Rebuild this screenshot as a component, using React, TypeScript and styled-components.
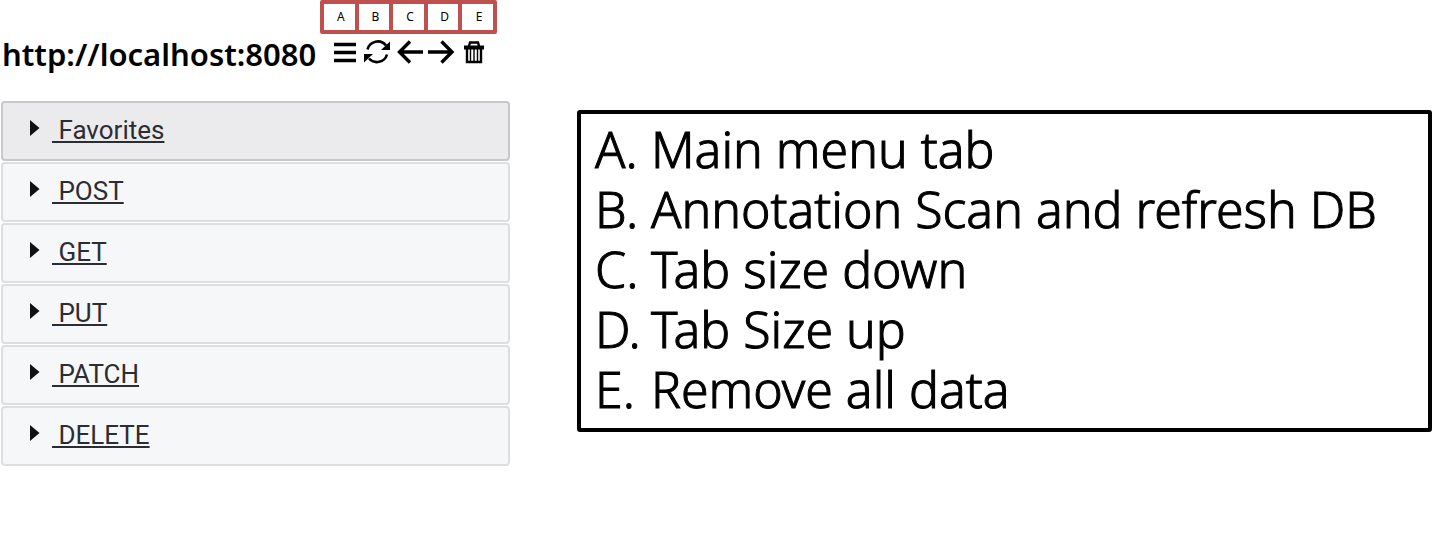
import React from "react";
import styled, { createGlobalStyle } from "styled-components";

const GlobalStyle = createGlobalStyle`
  *, *::before, *::after { box-sizing: border-box; }
  body {
    margin: 0;
    background: #fff;
    color: #000;
    font-family: "Noto Sans", "Open Sans", sans-serif;
  }
`;

const Page = styled.main`
  display: flex;
  align-items: flex-start;
`;

const Sidebar = styled.section`
  flex: 0 1 512px;
  padding-right: 2px;
`;

const Header = styled.header`
  display: grid;
  grid-template-columns: 320px max-content;
  grid-template-rows: 34px 40px;
  align-items: center;
  margin-bottom: 27px;
`;

const Title = styled.h1`
  grid-row: 2;
  margin: 0;
  padding-left: 2px;
  font-size: 31px;
  line-height: 40px;
  font-weight: 600;
  white-space: nowrap;
`;

const Tags = styled.ol`
  grid-column: 2;
  display: grid;
  grid-template-columns: repeat(5, 1fr);
  gap: 4px;
  width: 177px;
  height: 34px;
  margin: 0;
  padding: 4px;
  list-style: none;
  background: #c0504d;
  border-radius: 2px;
`;

const Tag = styled.li`
  display: flex;
  align-items: center;
  justify-content: center;
  padding-left: 3px;
  background: #fff;
  font-size: 12px;
  line-height: 16px;
`;

const Toolbar = styled.div`
  grid-row: 2;
  grid-column: 2;
  display: flex;
  gap: 5px;
  padding: 0 0 4px 10px;
`;

const ToolButton = styled.button`
  display: flex;
  padding: 0;
  border: 0;
  background: none;
  color: #000;
  cursor: pointer;
`;

const Groups = styled.nav`
  display: flex;
  flex-direction: column;
  gap: 1px;
  padding-left: 1px;
`;

const Group = styled.details<{ $active?: boolean }>`
  border: 2px solid ${(p) => (p.$active ? "#c8c8c8" : "#dedede")};
  border-radius: 4px;
  background: ${(p) => (p.$active ? "#ebebed" : "#f6f7f9")};
`;

const GroupHeading = styled.summary`
  display: flex;
  align-items: center;
  height: 56px;
  padding: 0 0 2px 27px;
  list-style: none;
  cursor: pointer;
  &::-webkit-details-marker { display: none; }
`;

const Marker = styled.svg`
  flex: none;
  margin: 0 12px 4px 0;
`;

const GroupLink = styled.a`
  color: #2b2d33;
  font-family: Roboto, sans-serif;
  font-size: 26px;
  line-height: 30px;
  white-space: pre;
  text-decoration: underline;
  text-decoration-thickness: 2px;
  text-underline-offset: 2px;
  text-decoration-skip-ink: none;
`;

const Legend = styled.ol`
  flex: 1 1 0;
  min-width: 0;
  margin: 110px 0 0 65px;
  padding: 5px 14px 9px;
  border: 4px solid #000;
  border-radius: 3px;
  list-style: none;
`;

const LegendRow = styled.li`
  display: grid;
  grid-template-columns: 56px 1fr;
  font-size: 50px;
  line-height: 60px;
  font-weight: 300;
  -webkit-text-stroke: 1px #000;
  white-space: nowrap;
`;

const tools = [
  {
    label: "Main menu tab",
    width: 28,
    icon: <path d="M4 5.5h22M4 13.500h22M4 21.500h22" stroke="currentColor" strokeWidth="3.400" />,
  },
  {
    label: "Annotation scan and refresh DB",
    width: 29,
    icon: (
      <>
        <path d="M4.500 10.500A10.500 10.500 0 0 1 23 6.500M24 15.500A10.500 10.500 0 0 1 6 19.500" fill="none" stroke="currentColor" strokeWidth="2.600" />
        <path d="M27 2.500v8.500h-9zM1 23.500v-8.500h9z" fill="currentColor" />
      </>
    ),
  },
  {
    label: "Tab size down",
    width: 26,
    icon: <path d="M26 13H2M13 2.500L2.500 13 13 23.500" fill="none" stroke="currentColor" strokeWidth="3.400" />,
  },
  {
    label: "Tab size up",
    width: 27,
    icon: <path d="M0 13h24M13.500 2.500L24 13 13.500 23.500" fill="none" stroke="currentColor" strokeWidth="3.400" />,
  },
  {
    label: "Remove all data",
    width: 28,
    icon: (
      <>
        <path d="M4 6.500h20v4H4z" fill="currentColor" />
        <path d="M9 7L10 3.500h8L19 7M7 9v14h14V9" fill="none" stroke="currentColor" strokeWidth="2.400" />
        <path d="M10.500 10v12M14 10v12M17.500 10v12" stroke="currentColor" strokeWidth="1.400" />
      </>
    ),
  },
];

const groups = ["Favorites", "POST", "GET", "PUT", "PATCH", "DELETE"];

const legend = [
  ["A", "Main menu tab"],
  ["B", "Annotation Scan and refresh DB"],
  ["C", "Tab size down"],
  ["D", "Tab Size up"],
  ["E", "Remove all data"],
];

export default function App() {
  return (
    <>
      <GlobalStyle />
      <Page>
        <Sidebar>
          <Header>
            <Tags>
              {legend.map(([key]) => (
                <Tag key={key}>{key}</Tag>
              ))}
            </Tags>
            <Title>http://localhost:8080</Title>
            <Toolbar>
              {tools.map((tool) => (
                <ToolButton key={tool.label} type="button" aria-label={tool.label}>
                  <svg width={tool.width} height="26" viewBox={`0 0 ${tool.width} 26`} aria-hidden="true">
                    {tool.icon}
                  </svg>
                </ToolButton>
              ))}
            </Toolbar>
          </Header>
          <Groups>
            {groups.map((name, index) => (
              <Group key={name} $active={index === 0}>
                <GroupHeading>
                  <Marker width="10" height="16" viewBox="0 0 10 16" aria-hidden="true">
                    <path d="M0 0l9.500 8L0 16z" fill="#111" />
                  </Marker>
                  <GroupLink href={`#${name.toLowerCase()}`}>{` ${name}`}</GroupLink>
                </GroupHeading>
              </Group>
            ))}
          </Groups>
        </Sidebar>
        <Legend>
          {legend.map(([key, text]) => (
            <LegendRow key={key}>
              <span>{key}.</span>
              <span>{text}</span>
            </LegendRow>
          ))}
        </Legend>
      </Page>
    </>
  );
}
